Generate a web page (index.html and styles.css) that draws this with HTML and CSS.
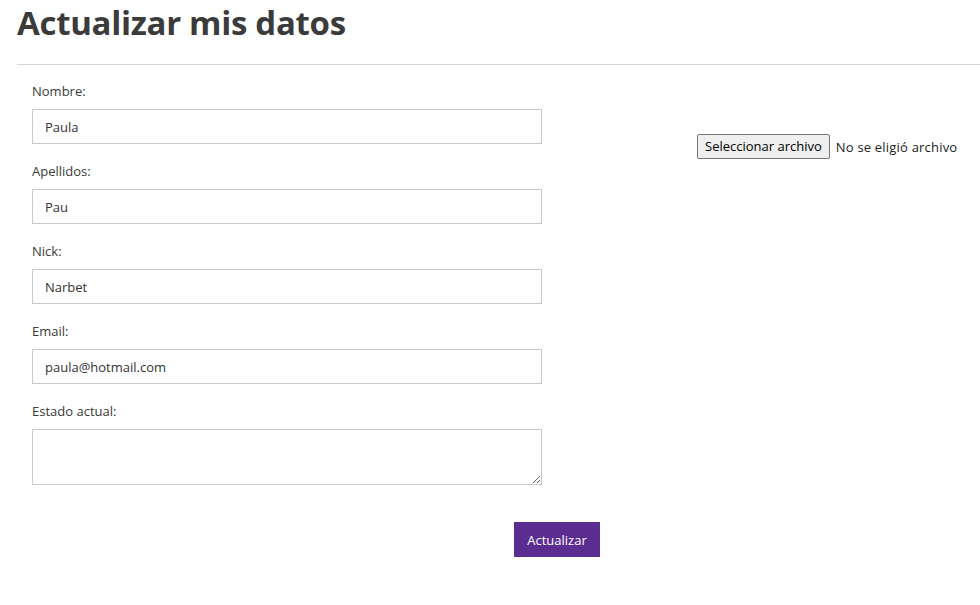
FILE: index.html
```html
<!DOCTYPE html>
<html lang="es">
<head>
<meta charset="utf-8">
<title>Actualizar mis datos</title>
<link rel="stylesheet" href="styles.css">
</head>
<body>
<div class="page">
  <h1 class="title">Actualizar mis datos</h1>
  <hr class="rule">
  <form class="form">
    <div class="layout">
      <div class="fields">
        <div class="group">
          <label class="label">Nombre:</label>
          <input class="input" type="text" value="Paula">
        </div>
        <div class="group">
          <label class="label">Apellidos:</label>
          <input class="input" type="text" value="Pau">
        </div>
        <div class="group">
          <label class="label">Nick:</label>
          <input class="input" type="text" value="Narbet">
        </div>
        <div class="group">
          <label class="label">Email:</label>
          <input class="input" type="text" value="paula@hotmail.com">
        </div>
        <div class="group">
          <label class="label">Estado actual:</label>
          <textarea class="textarea"></textarea>
        </div>
      </div>
      <div class="file">
        <span class="file-btn">Seleccionar archivo</span>
        <span class="file-text">No se eligió archivo</span>
      </div>
    </div>
    <div class="actions">
      <button class="submit" type="button">Actualizar</button>
    </div>
  </form>
</div>
</body>
</html>
```
FILE: styles.css
```css
* { box-sizing: border-box; }
body {
  margin: 0;
  background: #fff;
  font-family: "Open Sans", "Noto Sans", sans-serif;
  color: #333;
}
.page {
  padding-left: 17px;
  padding-top: 1px;
}
.title {
  margin: 0;
  padding-top: 0;
  font-size: 33px;
  line-height: 44px;
  font-weight: 700;
  color: #3b3b3b;
  letter-spacing: -0.3px;
}
.rule {
  margin: 19px 0 0 0;
  border: 0;
  border-top: 1px solid #d6d6e0;
  width: calc(100% + 20px);
}
.form {
  padding-left: 15px;
  padding-top: 17px;
}
.layout {
  display: flex;
  align-items: flex-start;
}
.fields {
  width: 510px;
}
.group {
  display: flex;
  flex-direction: column;
}
.label {
  font-size: 13px;
  line-height: 18px;
  color: #3a3a3a;
  margin-bottom: 9px;
}
.input {
  height: 35px;
  width: 510px;
  border: 1px solid #c9c9c9;
  padding: 0 12px;
  font-family: inherit;
  font-size: 13px;
  color: #333;
  margin-bottom: 18px;
  outline: none;
}
.textarea {
  height: 56px;
  width: 510px;
  border: 1px solid #c9c9c9;
  font-family: inherit;
  font-size: 13px;
  resize: vertical;
}
.file {
  margin-left: 155px;
  margin-top: 52px;
  display: flex;
  align-items: center;
  font-size: 13px;
  color: #222;
}
.file-btn {
  display: inline-block;
  height: 25px;
  line-height: 22px;
  padding: 0 7px;
  background: #efefef;
  border: 1px solid #767676;
  border-radius: 2px;
  color: #000;
}
.file-text {
  margin-left: 6px;
  color: #222;
  letter-spacing: 0.2px;
}
.actions {
  width: 568px;
  display: flex;
  justify-content: flex-end;
  margin-top: 37px;
}
.submit {
  height: 35px;
  width: 86px;
  background: #5c2d91;
  color: #fff;
  border: 0;
  font-family: inherit;
  font-size: 13px;
}
```
